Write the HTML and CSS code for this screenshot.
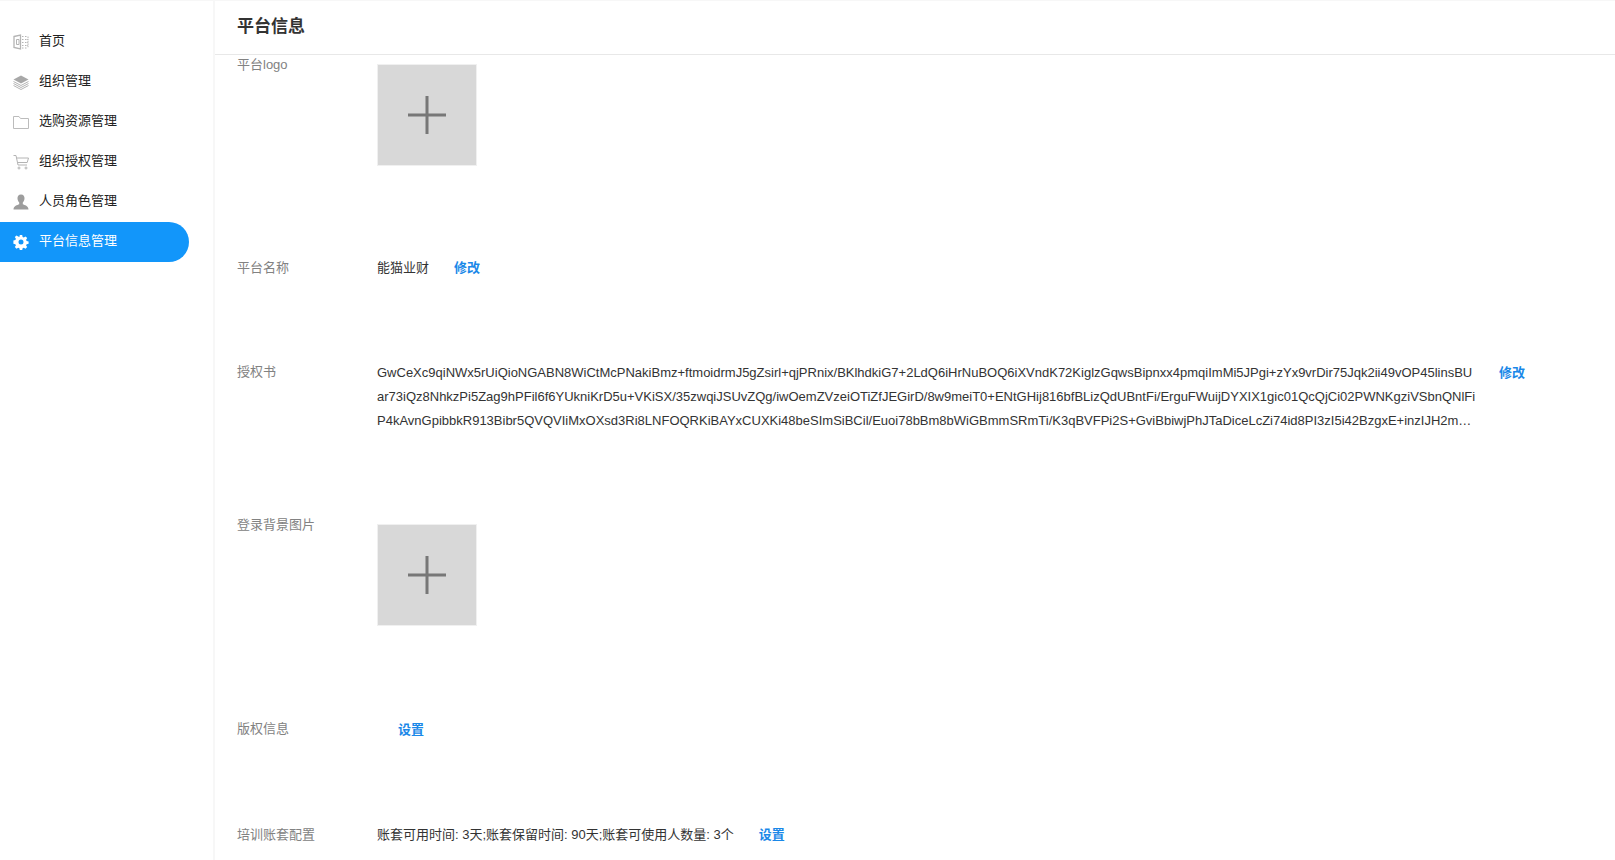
FILE: index.html
```html
<!DOCTYPE html>
<html lang="zh">
<head>
<meta charset="utf-8">
<title>平台信息</title>
<link rel="stylesheet" href="styles.css">
</head>
<body>
<div class="app">
  <nav class="sidebar">
    <a class="menu-item">
      <svg class="icon" viewBox="0 0 16 16" fill="none" stroke="#b4b4b4" stroke-width="1"><path d="M1 2.500 7.500 1v14L1 13.500z" stroke-width="1.300"/><path d="M3.500 5.500h2.500v5H3.500z"/><path d="M9 2.500h1.500M12 2.500h1.500M9 5.500h1.500M12 5.500h3M9 8.500h1.500M12 8.500h3M9 11.500h1.500M12 11.500h3M9 14h1.500M12 14h1.500M15 2.500v11" stroke-dasharray="1.500 .8"/></svg>
      <span>首页</span>
    </a>
    <a class="menu-item">
      <svg class="icon" viewBox="0 0 16 16"><path d="M8 1.500 15.500 5.500 8 9.500.5 5.500z" fill="#a8a8a8"/><path d="M.5 7.500 8 11.500l7.500-4M.5 9.500 8 13.500l7.500-4M.5 11.500 8 15.500l7.500-4" fill="none" stroke="#b4b4b4"/></svg>
      <span>组织管理</span>
    </a>
    <a class="menu-item">
      <svg class="icon" viewBox="0 0 16 16" fill="none" stroke="#bcbcbc"><path d="M.5 14.500V2.500h5.500l1.500 2h8v10z"/></svg>
      <span>选购资源管理</span>
    </a>
    <a class="menu-item">
      <svg class="icon" viewBox="0 0 16 16" fill="none" stroke="#b4b4b4"><path d="M.5 1.500H3l2 9.500h9"/><path d="M3.500 4h12l-1.300 4.500H5"/><circle cx="6" cy="14" r="1"/><circle cx="13" cy="14" r="1"/></svg>
      <span>组织授权管理</span>
    </a>
    <a class="menu-item">
      <svg class="icon" viewBox="0 0 16 16"><path d="M8 .5c2.600 0 3.600 1.900 3.500 4-.1 1.700-.8 3.100-1.700 4v1.700c1.800 1 5.700 1.300 5.700 5.300H.5c0-4 3.900-4.300 5.700-5.300V8.500c-.9-.9-1.600-2.300-1.700-4C4.400 2.400 5.400.5 8 .5z" fill="#9d9d9d"/></svg>
      <span>人员角色管理</span>
    </a>
    <a class="menu-item active">
      <svg class="icon" viewBox="0 0 16 16"><path fill-rule="evenodd" d="M6.800 1h2.400l.4 2 1.200.5 1.700-1.100 1.700 1.700-1.100 1.700.5 1.200 2 .4v2.400l-2 .4-.5 1.200 1.100 1.700-1.700 1.700-1.700-1.100-1.200.5-.4 2H6.800l-.4-2-1.200-.5-1.700 1.100-1.700-1.700 1.100-1.700-.5-1.200-2-.4V6.400l2-.4.5-1.200-1.100-1.700 1.700-1.700 1.700 1.100L6.400 3zM8 5.500a2.500 2.500 0 1 0 0 5 2.500 2.500 0 0 0 0-5z" fill="#fff"/></svg>
      <span>平台信息管理</span>
    </a>
  </nav>
  <main class="main">
    <header class="page-header"><h1 class="page-title">平台信息</h1></header>
    <section class="content">
      <div class="row row-logo">
        <div class="label">平台logo</div>
        <div class="value"><div class="upload"><svg class="plus" viewBox="0 0 38 38"><path d="M0 19h38M19 0v38" stroke="#777" stroke-width="3" fill="none"/></svg></div></div>
      </div>
      <div class="row row-name">
        <div class="label">平台名称</div>
        <div class="value">能猫业财<a class="link link-name">修改</a></div>
      </div>
      <div class="row row-license">
        <div class="label">授权书</div>
        <div class="value license">GwCeXc9qiNWx5rUiQioNGABN8WiCtMcPNakiBmz+ftmoidrmJ5gZsirl+qjPRnix/BKlhdkiG7+2LdQ6iHrNuBOQ6iXVndK72KiglzGqwsBipnxx4pmqiImMi5JPgi+zYx9vrDir75Jqk2ii49vOP45linsBUar73iQz8NhkzPi5Zag9hPFil6f6YUkniKrD5u+VKiSX/35zwqiJSUvZQg/iwOemZVzeiOTiZfJEGirD/8w9meiT0+ENtGHij816bfBLizQdUBntFi/ErguFWuijDYXIX1gic01QcQjCi02PWNKgziVSbnQNlFiP4kAvnGpibbkR913Bibr5QVQVIiMxOXsd3Ri8LNFOQRKiBAYxCUXKi48beSImSiBCil/Euoi78bBm8bWiGBmmSRmTi/K3qBVFPi2S+GviBbiwjPhJTaDiceLcZi74id8PI3zI5i42BzgxE+inzIJH2mQx7Wb4KpLs9TfRe3NuYc1HvZa6GdMi0OtSj8XwPq2</div>
        <a class="link link-license">修改</a>
      </div>
      <div class="row row-bg">
        <div class="label">登录背景图片</div>
        <div class="value"><div class="upload"><svg class="plus" viewBox="0 0 38 38"><path d="M0 19h38M19 0v38" stroke="#777" stroke-width="3" fill="none"/></svg></div></div>
      </div>
      <div class="row row-copyright">
        <div class="label">版权信息</div>
        <div class="value"><a class="link link-copyright">设置</a></div>
      </div>
      <div class="row row-train">
        <div class="label">培训账套配置</div>
        <div class="value">账套可用时间: 3天;账套保留时间: 90天;账套可使用人数量: 3个<a class="link link-train">设置</a></div>
      </div>
    </section>
  </main>
</div>
</body>
</html>
```
FILE: styles.css
```css
* { box-sizing: border-box; }
html, body { margin: 0; height: 100%; overflow: hidden; background: #fff; }
body {
  font-family: "Liberation Sans", Arial, "Noto Sans CJK SC", sans-serif;
  font-size: 13px;
  color: #333;
}
.app {
  display: flex;
  height: 100vh;
  border-top: 1px solid #f7f7f7;
}
.sidebar {
  flex: 0 0 215px;
  padding-top: 21px;
  padding-right: 24px;
  border-right: 2px solid #f7f7f7;
}
.menu-item {
  display: flex;
  align-items: center;
  gap: 10px;
  height: 40px;
  padding-left: 13px;
  font-size: 13px;
  color: #222;
  border-radius: 0 20px 20px 0;
}
.menu-item span { padding-bottom: 5px; }
.menu-item.active { background: #1296fa; color: #fff; }
.icon { width: 16px; height: 16px; flex: none; }
.main { flex: 1; min-width: 0; display: flex; flex-direction: column; }
.page-header {
  height: 54px;
  flex: none;
  padding: 0 22px;
  display: flex;
  align-items: center;
  border-bottom: 1px solid #e8e8e8;
}
.page-title { margin: 0 0 6px; font-size: 17px; font-weight: 700; color: #333; }
.content { padding: 0 22px; }
.row { display: flex; align-items: flex-start; line-height: 20px; }
.label { flex: 0 0 140px; color: #828282; }
.value { min-width: 0; }
.upload {
  width: 100px;
  height: 102px;
  background: #d8d8d8;
  border: 1px solid #f0f0f0;
  display: flex;
  align-items: center;
  justify-content: center;
}
.plus { width: 38px; height: 38px; }
.link { color: #1a88e8; font-weight: 700; }
.link-name { margin-left: 25px; }
.link-train { margin-left: 25px; }
.link-copyright { margin-left: 21px; }
.link-license { margin-left: 22px; flex: none; }
.row-logo { height: 203px; }
.row-logo .value, .row-bg .value { padding-top: 9px; }
.row-name { height: 105px; }
.row-license { height: 152px; }
.row-license .label { margin-top: -1px; }
.license {
  width: 1100px;
  margin-top: -2px;
  font-size: 13px;
  line-height: 24px;
  word-break: break-all;
  display: -webkit-box;
  -webkit-box-orient: vertical;
  -webkit-line-clamp: 3;
  overflow: hidden;
}
.row-bg { height: 204px; }
.row-copyright { height: 106px; }
.row-copyright .value { padding-top: 1px; }
```
